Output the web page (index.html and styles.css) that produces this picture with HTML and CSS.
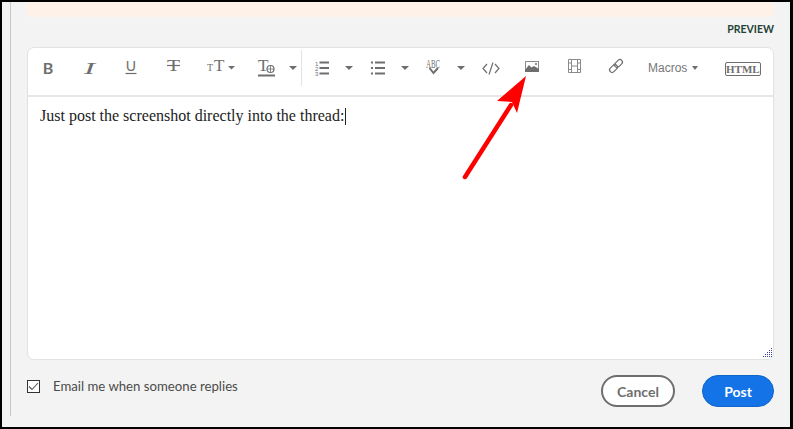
FILE: index.html
```html
<!DOCTYPE html>
<html lang="en">
<head>
    <meta charset="UTF-8">
    <title>Reply</title>
    <link rel="stylesheet" href="styles.css">
</head>
<body>
    <div class="frame">
        <div class="thread">
            <div class="notice"></div>
            <div class="preview-row"><a class="preview">PREVIEW</a></div>

            <div class="editor">
                <div class="toolbar">
                    <span class="tool"><svg width="40" height="30" viewBox="28 50 40 30"><text class="ico-bold" x="48" y="74" text-anchor="middle">B</text></svg></span>
                    <span class="tool"><svg width="41" height="30" viewBox="68 50 41 30"><text class="ico-italic" x="84" y="74" textLength="11" lengthAdjust="spacingAndGlyphs">I</text></svg></span>
                    <span class="tool"><svg width="43" height="30" viewBox="109 50 43 30"><text class="ico-under" x="131" y="71" text-anchor="middle">U</text><path class="ln" d="M125.500 73.500h11"/></svg></span>
                    <span class="tool"><svg width="42" height="30" viewBox="152 50 42 30"><text class="ico-serif" x="167" y="71" textLength="13" lengthAdjust="spacingAndGlyphs">T</text><path class="ln" d="M167 65.500h13"/></svg></span>
                    <span class="tool"><svg width="55" height="30" viewBox="194 50 55 30"><text class="ico-small" x="207" y="71">T</text><text class="ico-serif" x="214" y="71">T</text><path class="fill" d="M228 66h7l-3.500 3.500z"/></svg></span>
                    <span class="tool"><svg width="35" height="30" viewBox="249 50 35 30"><text class="ico-serif" x="258" y="71">T</text><circle class="ln" cx="270.500" cy="69" r="3.500"/><path class="ln thin" d="M267 69h7M270.500 65.500v7"/><path class="ln thick" d="M258 75.500h17"/></svg></span>
                    <span class="tool tool-divider"><i class="caret"></i></span>
                    <span class="tool"><svg width="40" height="30" viewBox="302 50 40 30"><text class="ico-num" x="315" y="66">1</text><text class="ico-num" x="315" y="71">2</text><text class="ico-num" x="315" y="76">3</text><path class="ln thick" d="M319.500 62.500H329M319.500 68H329M319.500 73.500H329"/></svg></span>
                    <span class="tool"><i class="caret"></i></span>
                    <span class="tool"><svg width="44" height="30" viewBox="356 50 44 30"><path class="ln thick" d="M375 62.500h10M375 68h10M375 73.500h10M371 62.500h2M371 68h2M371 73.500h2"/></svg></span>
                    <span class="tool"><i class="caret"></i></span>
                    <span class="tool"><svg width="46" height="30" viewBox="410 50 46 30"><text class="ico-abc" x="426" y="68" textLength="14" lengthAdjust="spacingAndGlyphs">ABC</text><path class="ln thick" d="M429.500 68l4 5 4.500-5"/></svg></span>
                    <span class="tool"><i class="caret"></i></span>
                    <span class="tool"><svg width="48" height="30" viewBox="466 50 48 30"><path class="ln" d="M487 64l-4 4.500 4 4.500M495 64l4 4.500-4 4.500M493 62.500l-4 12"/></svg></span>
                    <span class="tool"><svg width="36" height="30" viewBox="514 50 36 30"><rect x="525.500" y="61.500" width="13" height="10" fill="#fff" stroke="#8a8a8a"/><path class="fill" d="M525 70l4-5 2.500 2.500L534 66l5 3v3h-14z"/><circle class="fill" cx="536" cy="64" r="1"/></svg></span>
                    <span class="tool"><svg width="48" height="30" viewBox="550 50 48 30"><path class="ln film" d="M568.500 59.500h12v13h-12zM571.500 59.500v13M577.500 59.500v13M571.500 66h6M568.500 63h3M568.500 69.500h3M577.500 63h3M577.500 69.500h3"/></svg></span>
                    <span class="tool"><svg width="36" height="30" viewBox="598 50 36 30"><rect class="ln" x="614" y="61" width="9" height="5" rx="2.500" transform="rotate(-45 618.500 63.500)"/><rect class="ln" x="609" y="66" width="9" height="5" rx="2.500" transform="rotate(-45 613.500 68.500)"/></svg></span>
                    <span class="tool tool-macros">Macros<i class="caret caret-small"></i></span>
                    <span class="tool tool-html"><span class="html-badge">HTML</span></span>
                </div>
                <div class="body-text">
                    <div class="body-line">Just post the screenshot directly into the thread:<span class="cursor"></span></div>
                    <svg class="grip" width="10" height="10" viewBox="0 0 10 10"><path d="M8.500 0v1M6.500 2v1M8.500 2v1M4.500 4v1M6.500 4v1M8.500 4v1M2.500 6v1M4.500 6v1M6.500 6v1M8.500 6v1M.5 8v1M2.500 8v1M4.500 8v1M6.500 8v1M8.500 8v1" stroke="#3a3f9f"/></svg>
                </div>
            </div>

            <div class="actions">
                <label class="notify">
                    <span class="checkbox"><svg width="11" height="9" viewBox="0 0 11 9"><path d="M1 4.500 4 7.500 10 1" fill="none" stroke="#555" stroke-width="1.100"/></svg></span>
                    Email me when someone replies
                </label>
                <div class="buttons">
                    <button class="btn btn-cancel">Cancel</button>
                    <button class="btn btn-post">Post</button>
                </div>
            </div>
        </div>

        <!-- red annotation arrow over the toolbar -->
        <svg class="arrow" width="793" height="429" viewBox="0 0 793 429"><path d="M465 177 511 105" stroke="#fe0000" stroke-width="4.500" stroke-linecap="round"/><path d="M526 76 497 101 512 102 517 113z" fill="#fe0000"/></svg>
    </div>
</body>
</html>
```

FILE: styles.css
```css
* {
    box-sizing: border-box;
}
body {
    margin: 0;
    background-color: #000;
    font-family: 'Lato', 'Liberation Sans', sans-serif;
}
.frame {
    position: relative;
    width: 788px;
    height: 425px;
    margin: 2px 3px 2px 2px;
    background-color: #f3f3f3;
    overflow: hidden;
    padding-left: 8px;
}
.thread {
    width: 780px;
    height: 414px;
    padding: 0 16px;
    border-left: 1px solid #c8c8c8;
}
.notice {
    height: 15px;
    background-color: #fdf1e8;
}
.preview-row {
    height: 30px;
    display: flex;
    justify-content: flex-end;
    padding-top: 6px;
}
.preview {
    font-size: 10.5px;
    line-height: 13px;
    font-weight: 700;
    color: #1f4338;
}
.editor {
    height: 313px;
    display: flex;
    flex-direction: column;
    background-color: #fff;
    border: 1px solid #e2e2e2;
    border-radius: 7px;
}
.toolbar {
    height: 49px;
    flex: none;
    display: grid;
    grid-template-columns: 40px 41px 43px 42px 55px 35px 18px 40px 14px 44px 10px 46px 10px 48px 36px 48px 36px 70px 1fr;
    border-bottom: 2px solid #e6e6e6;
}
.tool {
    display: flex;
    justify-content: center;
    align-items: flex-start;
    padding-top: 2px;
}
.tool svg {
    display: block;
}
.tool > .caret {
    margin-top: 16px;
}
.tool-divider {
    height: 36px;
    margin-top: 2px;
    padding-top: 0;
    border-right: 1px solid #e2e2e2;
}
.caret {
    display: block;
    width: 0;
    height: 0;
    border-left: 4px solid transparent;
    border-right: 4px solid transparent;
    border-top: 4px solid #6e6e6e;
}
.tool > .caret-small {
    margin-top: 5px;
    border-left-width: 3px;
    border-right-width: 3px;
}
.ln {
    fill: none;
    stroke: #6e6e6e;
    stroke-width: 1.2;
}
.thin {
    stroke-width: 0.8;
}
.thick {
    stroke-width: 2;
}
.film {
    stroke: #8a8a8a;
    stroke-width: 1;
}
.fill {
    fill: #6e6e6e;
}
.ico-bold, .ico-italic, .ico-under, .ico-serif, .ico-small, .ico-num, .ico-abc {
    fill: #6e6e6e;
}
.ico-bold {
    font: 700 16px 'Lato', sans-serif;
}
.ico-under {
    font: 400 14px 'Lato', sans-serif;
}
.ico-italic {
    font: italic 400 17px 'Liberation Serif', serif;
}
.ico-serif {
    font: 400 17px 'Liberation Serif', serif;
}
.ico-small {
    font: 400 10px 'Liberation Serif', serif;
}
.ico-num {
    font: 400 6px 'Liberation Sans', sans-serif;
}
.ico-abc {
    font: 400 12px 'Liberation Serif', serif;
}
.tool-macros {
    justify-content: flex-start;
    gap: 5px;
    padding: 13px 0 0 14px;
    font-family: 'Liberation Sans', sans-serif;
    font-size: 12px;
    line-height: 14px;
    color: #777;
}
.tool-html {
    justify-content: flex-start;
    padding: 14px 0 0 21px;
}
.html-badge {
    font-family: 'Liberation Serif', serif;
    font-size: 11px;
    font-weight: 700;
    line-height: 12px;
    color: #6e6e6e;
    border: 1px solid #6e6e6e;
    border-radius: 2px;
}
.body-text {
    position: relative;
    flex: 1;
    padding: 9px 12px;
    font-family: 'Liberation Serif', serif;
    font-size: 16px;
    color: #222;
}
.body-line {
    line-height: 20px;
}
.cursor {
    display: inline-block;
    width: 1px;
    height: 17px;
    margin-left: 1px;
    background-color: #222;
    vertical-align: -4px;
}
.grip {
    position: absolute;
    right: 0;
    bottom: 1px;
}
.actions {
    display: flex;
    justify-content: space-between;
    align-items: center;
    padding-top: 15px;
}
.notify {
    display: flex;
    align-items: center;
    gap: 13px;
    font-size: 13.2px;
    color: #4b4b4b;
    padding-bottom: 11px;
}
.checkbox {
    width: 13px;
    height: 13px;
    margin-top: 2px;
    display: flex;
    align-items: center;
    justify-content: center;
    background-color: #fff;
    border: 1px solid #333;
}
.buttons {
    display: flex;
    gap: 27px;
}
.btn {
    height: 32px;
    border-radius: 16px;
    font-family: 'Lato', 'Liberation Sans', sans-serif;
    font-size: 14px;
    font-weight: 700;
}
.btn-cancel {
    width: 74px;
    color: #6e6e6e;
    background-color: #fff;
    border: 2px solid #6e6e6e;
}
.btn-post {
    width: 72px;
    color: #fff;
    background-color: #1473e6;
    border: 1px solid #0f66c8;
}
.arrow {
    position: absolute;
    left: -2px;
    top: -2px;
    pointer-events: none;
}
```
